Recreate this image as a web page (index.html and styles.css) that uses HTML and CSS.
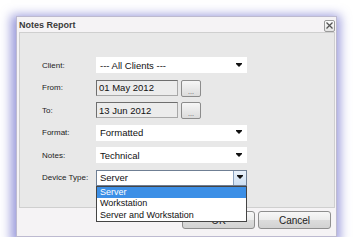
FILE: index.html
```html
<!DOCTYPE html>
<html>
    <head>
        <meta charset="UTF-8">
        <title>Notes Report</title>
        <link rel="stylesheet" href="styles.css">
    </head>
    <body>
        <div class="dialog">
            <div class="titleBar">
                <div class="title">Notes Report</div>
                <div class="closeBtn">
                    <svg width="7" height="7" viewBox="0 0 7 7"><path d="M0.5 0.5 L6.5 6.5 M6.5 0.5 L0.5 6.5" stroke="#555" stroke-width="1.3"/></svg>
                </div>
            </div>

            <div class="panel">
                <div class="form">
                    <div class="label">Client:</div>
                    <div class="select"><span>--- All Clients ---</span><i class="arrow"></i></div>

                    <div class="label">From:</div>
                    <div class="dateRow">
                        <div class="dateField">01 May 2012</div>
                        <div class="dotsBtn"><span>...</span></div>
                    </div>

                    <div class="label">To:</div>
                    <div class="dateRow">
                        <div class="dateField">13 Jun 2012</div>
                        <div class="dotsBtn"><span>...</span></div>
                    </div>

                    <div class="label">Format:</div>
                    <div class="select"><span>Formatted</span><i class="arrow"></i></div>

                    <div class="label">Notes:</div>
                    <div class="select"><span>Technical</span><i class="arrow"></i></div>

                    <div class="label">Device Type:</div>
                    <div class="select open">
                        <span>Server</span>
                        <div class="comboBtn"><i class="arrow"></i></div>
                        <div class="dropList">
                            <div class="option selected">Server</div>
                            <div class="option">Workstation</div>
                            <div class="option">Server and Workstation</div>
                        </div>
                    </div>
                </div>
            </div>

            <div class="footer">
                <div class="btn">OK</div>
                <div class="btn">Cancel</div>
            </div>
        </div>
    </body>
</html>
```

FILE: styles.css
```css
html, body {
    margin: 0px;
    padding: 0px;
    background-color: #fff;
}

body {
    padding: 16px 0px 0px 16px;
    font-family: "Liberation Sans", Arial, sans-serif;
}

.dialog {
    display: flex;
    flex-direction: column;
    width: 321px;
    height: 221px;
    background-color: #f5f3f5;
    border: 1px solid #bdbad0;
    box-sizing: border-box;
    box-shadow: -1px 3px 10px 4px rgba(85, 85, 195, 0.6);
}

.titleBar {
    display: flex;
    align-items: center;
    justify-content: space-between;
    height: 15px;
    padding: 0px 1px 0px 2px;
}

.title {
    font-size: 9px;
    font-weight: bold;
    color: #3a3a3a;
}

.closeBtn {
    display: flex;
    align-items: center;
    justify-content: center;
    width: 9px;
    height: 10px;
    margin-top: 2px;
    border: 1px solid #9a9a9a;
    border-radius: 2px;
    background: linear-gradient(#fdfdfd, #e4e4e4);
}

.panel {
    height: 176px;
    margin: 0px 1px 0px 2px;
    background-color: #e8e8e8;
    border: 1px solid #cfcfcf;
    box-sizing: border-box;
}

.form {
    display: grid;
    grid-template-columns: 54px 151px;
    grid-auto-rows: 16px;
    row-gap: 6.6px;
    align-items: center;
    padding: 24px 0px 0px 22px;
}

.label {
    font-size: 8px;
    color: #222;
}

.select {
    position: relative;
    display: flex;
    align-items: center;
    justify-content: space-between;
    height: 16px;
    padding: 0px 5px 0px 4px;
    background-color: #fff;
    box-sizing: border-box;
    font-size: 9.5px;
    color: #111;
}

.arrow {
    display: block;
    width: 0px;
    height: 0px;
    border-left: 3px solid transparent;
    border-right: 3px solid transparent;
    border-top: 3px solid #111;
    box-shadow: 0px -1px 0px 0px #111;
}

.dateRow {
    display: flex;
    gap: 3px;
    height: 16px;
}

.dateField {
    display: flex;
    align-items: center;
    width: 82px;
    padding-left: 2px;
    background-color: #ececec;
    border: 1px solid #a8a8a8;
    border-top-color: #6e6e6e;
    border-left-color: #6e6e6e;
    box-sizing: border-box;
    font-size: 9.5px;
    color: #111;
}

.dotsBtn {
    display: flex;
    align-items: flex-end;
    justify-content: center;
    width: 20px;
    height: 17px;
    border: 1px solid #8c8c8c;
    border-radius: 2px;
    background: linear-gradient(#f6f6f6, #dcdcdc);
    box-sizing: border-box;
    font-size: 7px;
    color: #555;
    line-height: 9px;
}

.open {
    padding-right: 0px;
    border: 1px solid #6f7f94;
    padding-left: 3px;
}

.comboBtn {
    display: flex;
    align-items: center;
    justify-content: center;
    width: 13px;
    height: 100%;
    background: linear-gradient(#e9f1fa, #cddff2);
    border-left: 1px solid #8aa2c0;
    box-sizing: border-box;
}

.dropList {
    position: absolute;
    top: 15px;
    left: -1px;
    width: 151px;
    background-color: #fff;
    border: 1px solid #444;
    box-sizing: border-box;
    z-index: 10;
}

.option {
    height: 11.3px;
    padding-left: 3px;
    font-size: 9px;
    line-height: 11.3px;
    color: #111;
}

.option.selected {
    background-color: #3c8fe6;
    color: #fff;
}

.footer {
    display: flex;
    justify-content: flex-end;
    gap: 3px;
    padding: 3px 5px 0px 0px;
}

.btn {
    display: flex;
    align-items: center;
    justify-content: center;
    width: 73px;
    height: 18px;
    border: 1px solid #8e8e8e;
    border-radius: 3px;
    background: linear-gradient(#f7f7f7 0%, #ebebeb 50%, #dcdcdc 51%, #d2d2d2 100%);
    box-sizing: border-box;
    font-size: 10px;
    color: #222;
}
```
